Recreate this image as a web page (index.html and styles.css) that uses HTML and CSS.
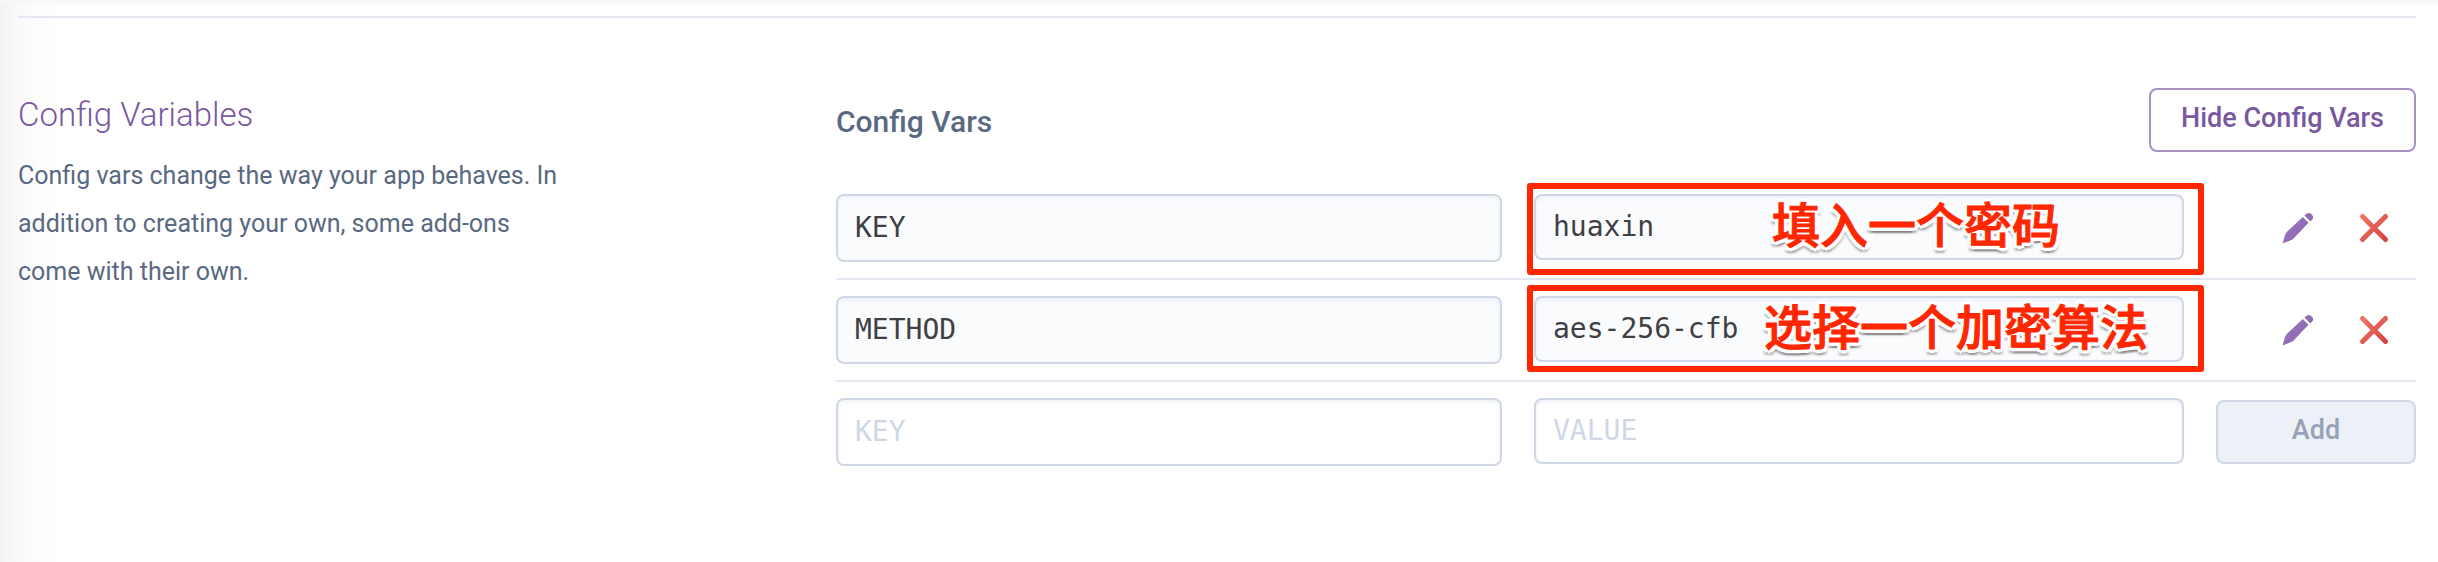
FILE: index.html
```html
<!DOCTYPE html>
<html lang="en">
<head>
<meta charset="utf-8">
<title>Config Variables</title>
<link rel="stylesheet" href="styles.css">
</head>
<body>
<svg class="defs" width="0" height="0" aria-hidden="true">
  <defs>
    <linearGradient id="purple" x1="0" y1="0" x2="1" y2="1">
      <stop offset="0" stop-color="#9e7cc0"/>
      <stop offset="1" stop-color="#8560ad"/>
    </linearGradient>
    <linearGradient id="red" gradientUnits="userSpaceOnUse" x1="2" y1="2" x2="30" y2="30">
      <stop offset="0" stop-color="#f27c66"/>
      <stop offset="1" stop-color="#d63c40"/>
    </linearGradient>
    <symbol id="pencil" viewBox="0 0 32 32">
      <path fill="url(#purple)" d="M0.500 31.500L3 23Q3.600 21 5.200 19.400L20.800 5L26.500 10.700L11.600 26.400Q10 28 8 28.600ZM22.400 3.500L24.200 1.900Q26.800 -0.200 29.800 2.400Q32.300 5.200 30.200 7.600L28.300 9.400Z"/>
    </symbol>
    <symbol id="cross" viewBox="0 0 32 32">
      <path fill="none" stroke="url(#red)" stroke-width="5" stroke-linecap="round" d="M4.500 4.500L27.500 27.500M27.500 4.500L4.500 27.500"/>
    </symbol>
  </defs>
</svg>
<main class="page">
  <section class="panel">
    <div class="intro">
      <h2 class="intro-title">Config Variables</h2>
      <p class="intro-text">Config vars change the way your app behaves. In addition to creating your own, some add-ons come with their own.</p>
    </div>
    <div class="vars">
      <header class="vars-head">
        <h3 class="vars-title">Config Vars</h3>
        <button class="btn btn-outline" type="button">Hide Config Vars</button>
      </header>
      <form class="rows">
        <div class="row">
          <input class="field field-key" type="text" aria-label="Key" value="KEY" readonly>
          <div class="value">
            <input class="field field-value" type="text" aria-label="Value" value="huaxin" readonly>
            <div class="note note-password" lang="zh-CN">填入一个密码</div>
          </div>
          <div class="actions">
            <button class="icon-btn" type="button" aria-label="Edit"><svg class="icon"><use href="#pencil"/></svg></button>
            <button class="icon-btn" type="button" aria-label="Remove"><svg class="icon"><use href="#cross"/></svg></button>
          </div>
        </div>
        <div class="row">
          <input class="field field-key" type="text" aria-label="Key" value="METHOD" readonly>
          <div class="value">
            <input class="field field-value" type="text" aria-label="Value" value="aes-256-cfb" readonly>
            <div class="note note-method" lang="zh-CN">选择一个加密算法</div>
          </div>
          <div class="actions">
            <button class="icon-btn" type="button" aria-label="Edit"><svg class="icon"><use href="#pencil"/></svg></button>
            <button class="icon-btn" type="button" aria-label="Remove"><svg class="icon"><use href="#cross"/></svg></button>
          </div>
        </div>
        <div class="row">
          <input class="field field-key" type="text" aria-label="New key" placeholder="KEY">
          <div class="value">
            <input class="field field-value" type="text" aria-label="New value" placeholder="VALUE">
          </div>
          <button class="btn btn-add" type="submit" disabled>Add</button>
        </div>
      </form>
    </div>
  </section>
</main>
</body>
</html>
```
FILE: styles.css
```css
* {
  box-sizing: border-box;
}

body {
  margin: 0;
  min-height: 100vh;
  background:
    linear-gradient(to bottom, #f7f7f7, rgba(255, 255, 255, 0) 6px),
    linear-gradient(to right, #f3f3f3, #fafafa 20px, #fdfdfd 40px, #fff 64px);
  color: #596981;
  font-family: Roboto, "Liberation Sans", sans-serif;
}

.defs {
  position: absolute;
}

.page {
  padding: 16px 22px 0 18px;
}

.panel {
  display: grid;
  grid-template-columns: 818fr 1580fr;
  border-top: 2px solid #e3e7f3;
  padding-top: 70px;
}

.intro-title {
  margin: 0;
  padding-top: 7px;
  color: #79589f;
  font-size: 33px;
  line-height: 40px;
  font-weight: 300;
}

.intro-text {
  margin: 17px 0 0;
  max-width: 552px;
  font-size: 25px;
  line-height: 48px;
}

.vars-head {
  display: flex;
  justify-content: space-between;
  align-items: flex-start;
}

.vars-title {
  margin: 0;
  padding: 16px 0 0;
  font-size: 30px;
  line-height: 36px;
  font-weight: 500;
}

.btn {
  height: 64px;
  padding: 0 30px 4px;
  border-radius: 8px;
  font-family: inherit;
  font-size: 27px;
  font-weight: 500;
}

.btn-outline {
  border: 2px solid #a991c3;
  background: #fff;
  color: #79589f;
}

.btn-add {
  align-self: start;
  border: 2px solid #cfd7e6;
  margin-top: 2px;
  background: #edf0f6;
  color: #96a3b6;
}

.rows {
  margin-top: 26px;
}

.row {
  display: grid;
  grid-template-columns: 666fr 650fr 200px;
  column-gap: 32px;
  padding: 16px 0;
  border-bottom: 2px solid #e3e7f3;
}

.row:last-child {
  border-bottom: 0;
}

.value {
  position: relative;
}

.field {
  display: block;
  width: 100%;
  min-width: 0;
  margin: 0;
  padding: 0 17px 2px;
  border: 2px solid #cfd7e6;
  border-radius: 8px;
  background: #fff;
  box-shadow: inset 0 2px 4px #edf0f7;
  color: #3f3f44;
  font-family: "DejaVu Sans Mono", monospace;
  font-size: 28px;
}

.field-key {
  height: 68px;
}

.field-value {
  height: 66px;
}

.field:read-only {
  background: #fafbfd;
}

.field::placeholder {
  color: #cfd7e6;
  opacity: 1;
}

.note {
  position: absolute;
  inset: -11px -20px -13px -7px;
  border: 6px solid #ff2600;
  border-radius: 3px;
  padding-top: 9px;
  color: #ff2600;
  font-family: "Noto Sans CJK SC", sans-serif;
  font-size: 48px;
  line-height: 48px;
  font-weight: 500;
  white-space: nowrap;
  -webkit-text-stroke: 1px #ff2600;
  text-shadow:
    4px 0 #fff, -4px 0 #fff, 0 4px #fff, 0 -4px #fff,
    3px 3px #fff, -3px 3px #fff, 3px -3px #fff, -3px -3px #fff,
    2px 0 #fff, -2px 0 #fff, 0 2px #fff, 0 -2px #fff,
    3px 6px 2px rgba(0, 0, 0, 0.2), -3px 6px 2px rgba(0, 0, 0, 0.2),
    0 6px 2px rgba(0, 0, 0, 0.2);
  pointer-events: none;
}

.note-password {
  padding-left: 239px;
}

.note-method {
  bottom: -8px;
  padding-left: 231px;
}

.actions {
  display: flex;
  justify-content: flex-end;
  align-items: center;
  gap: 44px;
  padding-right: 26px;
}

.icon-btn {
  padding: 0;
  border: 0;
  background: none;
}

.icon {
  display: block;
  width: 32px;
  height: 32px;
}
```
